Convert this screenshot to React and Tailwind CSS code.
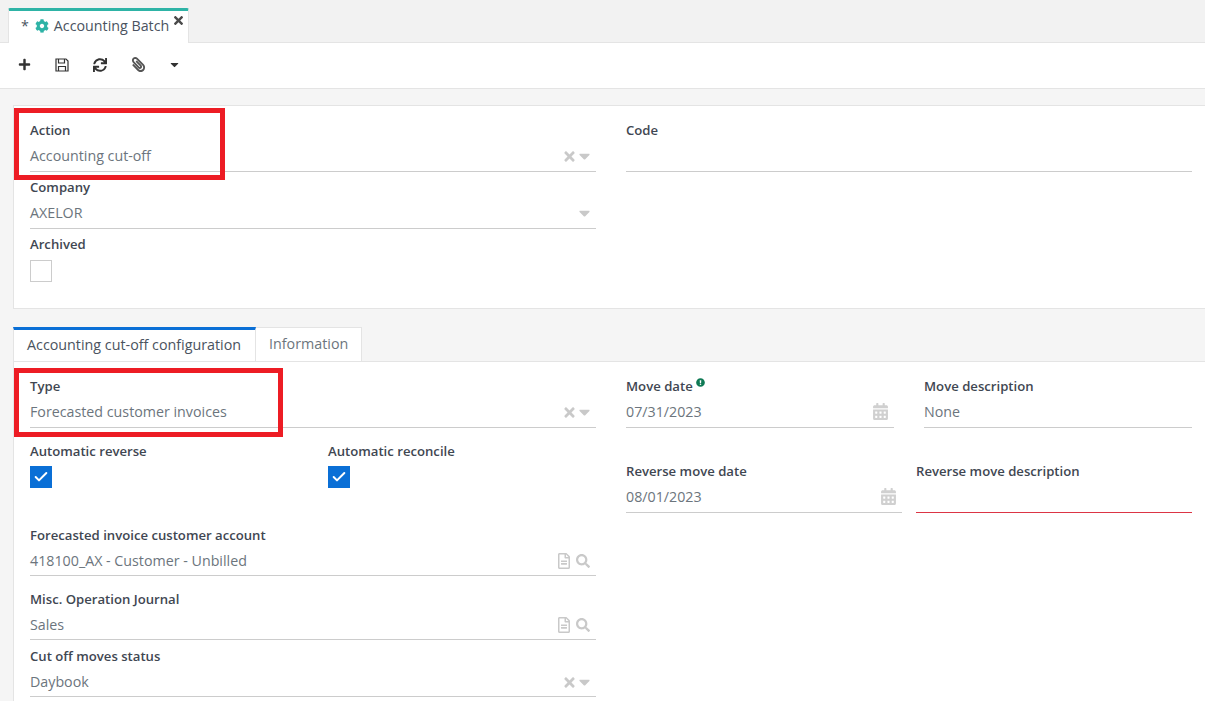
import React from 'react';
import { FaPlus, FaSync, FaPaperclip, FaCaretDown, FaTimes, FaCog, FaCalendarAlt, FaRegFileAlt, FaSearch, FaExclamationCircle } from 'react-icons/fa';
import { Check } from 'lucide-react';

const Label = ({ children }) => (
  <div className="h-[18px] text-[13.15px] leading-[18px] font-semibold text-[#3f4752]">{children}</div>
);

const Field = ({ label, value, icons, className = '', error, short }) => (
  <div className={className}>
    <Label>{label}</Label>
    <div className={`mt-[7px] flex items-start justify-between border-b pr-[6px] text-[14.25px] leading-[20px] text-[#6c757d] ${short ? 'h-[25px]' : 'h-[26px]'} ${error ? 'border-[#dc3545]' : 'border-[#cccccc]'}`}>
      <span>{value}</span>
      {icons}
    </div>
  </div>
);

const SelectIcons = ({ clear }) => (
  <span className="flex h-[20px] items-center gap-[4px] text-[#c9c9c9]">
    {clear && <FaTimes className="h-[15px] w-[11px]" />}
    <FaCaretDown className="h-[18px] w-[11px]" />
  </span>
);

const RefIcons = () => (
  <span className="flex h-[20px] items-center gap-[5px] text-[#c9c9c9]">
    <FaRegFileAlt className="h-[16px] w-[14px]" />
    <FaSearch className="h-[14px] w-[14px]" />
  </span>
);

const DateIcon = () => (
  <span className="flex h-[20px] items-center pb-[1px] text-[#d0d0d0]">
    <FaCalendarAlt className="h-[17px] w-[15px]" />
  </span>
);

const Checkbox = ({ checked, className = 'mt-[7px]' }) => (
  <div className={`flex h-[22px] w-[22px] items-center justify-center border ${className} ${checked ? 'border-[#0a6fd6] bg-[#0a6fd6]' : 'border-[#cccccc] bg-white'}`}>
    {checked && <Check className="h-[16px] w-[16px] text-white" strokeWidth={3} />}
  </div>
);

const App = () => {
  return (
    <div className="relative h-[701px] overflow-hidden bg-[#f5f5f5] font-['Open_Sans',sans-serif]">
      {/* Tab bar */}
      <div className="h-[43px] border-b border-[#e4e4e4] bg-[#f2f2f2] pl-2 pt-2">
        <div className="relative flex h-[35px] w-[181px] items-center rounded-t-[2px] border-x border-[#e4e4e4] border-t-[3px] border-t-[#2eb3a6] bg-white pb-[2px] pl-[12px] text-[14.25px] text-[#4a5360]">
          <span>*</span>
          <FaCog className="ml-[6px] h-[14px] w-[14px] text-[#2eb3a6]" />
          <span className="ml-[5px]">Accounting Batch</span>
          <FaTimes className="absolute right-[5px] top-[3px] h-[13px] w-[9px] text-[#4a4a4a]" />
        </div>
      </div>

      {/* Toolbar */}
      <div className="flex h-[46px] items-center border-b border-[#e4e4e4] bg-white pb-[2px] pl-[18px] text-[#333333]">
        <FaPlus className="h-[13px] w-[13px]" />
        <svg viewBox="0 0 14 14" fill="none" stroke="currentColor" strokeWidth="1.2" className="ml-[24px] h-[14px] w-[14px]">
          <path d="M1 1h10l2 2v10H1z" />
          <path d="M3.5 1v4h6V1" />
          <path d="M3.5 13V8.5h7V13" />
        </svg>
        <FaSync className="ml-[24px] h-[14px] w-[14px]" />
        <FaPaperclip className="ml-[24px] h-[15px] w-[15px] -scale-x-100 text-[#555555]" />
        <FaCaretDown className="ml-[24px] h-[13px] w-[9px]" />
      </div>

      {/* Main form panel */}
      <div className="ml-[13px] mt-4 h-[204px] border border-r-0 border-[#e4e4e4] bg-white pl-4 pr-[13px] pt-[15px]">
        <div className="grid grid-cols-[566px_566px] gap-x-[30px]">
          <div>
            <Field label="Action" value="Accounting cut-off" icons={<SelectIcons clear />} className="h-[57px]" />
            <Field label="Company" value="AXELOR" icons={<SelectIcons />} className="h-[57px]" />
            <Label>Archived</Label>
            <Checkbox />
          </div>
          <Field label="Code" className="h-[57px]" />
        </div>
      </div>

      {/* Bottom tabs */}
      <div className="ml-[13px] mt-[19px] flex h-[34px] items-end border-b border-[#e4e4e4] text-[14.3px]">
        <div className="flex h-[34px] w-[243px] items-center border-x border-[#e4e4e4] border-t-[3px] border-t-[#0a6fd6] bg-white pb-[2px] pl-[13px] text-[#4a5360]">
          Accounting cut-off configuration
        </div>
        <div className="flex h-[34px] w-[106px] items-center border-r border-t border-[#e4e4e4] bg-white pb-[2px] pl-[13px] text-[#6c757d]">
          Information
        </div>
      </div>

      {/* Tab content */}
      <div className="ml-[13px] h-[340px] border-l border-[#e4e4e4] bg-white pl-4 pr-[13px] pt-[15px]">
        <div className="grid grid-cols-[566px_566px] gap-x-[30px]">
          <div>
            <Field label="Type" value="Forecasted customer invoices" icons={<SelectIcons clear />} />
            <div className="mt-[14px] grid h-[84px] grid-cols-[298px_1fr]">
              <div>
                <Label>Automatic reverse</Label>
                <Checkbox checked className="mt-[6px]" />
              </div>
              <div>
                <Label>Automatic reconcile</Label>
                <Checkbox checked className="mt-[6px]" />
              </div>
            </div>
            <Field short label="Forecasted invoice customer account" value="418100_AX - Customer - Unbilled" icons={<RefIcons />} className="h-[64px]" />
            <Field short label="Misc. Operation Journal" value="Sales" icons={<RefIcons />} className="h-[57px]" />
            <Field short label="Cut off moves status" value="Daybook" icons={<SelectIcons clear />} />
          </div>
          <div>
            <div className="grid grid-cols-[268px_268px] gap-x-[30px]">
              <Field
                label={
                  <span className="flex items-start gap-[3px]">
                    Move date
                    <FaExclamationCircle className="mt-[1px] h-[9px] w-[9px] text-[#0f7a55]" />
                  </span>
                }
                value="07/31/2023"
                icons={<DateIcon />}
              />
              <Field label="Move description" value="None" />
            </div>
            <div className="mt-[34px] grid grid-cols-[276px_276px] gap-x-[14px]">
              <Field label="Reverse move date" value="08/01/2023" icons={<DateIcon />} />
              <Field label="Reverse move description" error />
            </div>
          </div>
        </div>
      </div>

      {/* Red highlight boxes drawn over the screenshot */}
      <div className="absolute left-[14px] top-[108px] h-[72px] w-[211px] border-[5px] border-[#ed1c24]" />
      <div className="absolute left-[14px] top-[368px] h-[69px] w-[269px] border-[5px] border-[#ed1c24]" />
    </div>
  );
};

export default App;
